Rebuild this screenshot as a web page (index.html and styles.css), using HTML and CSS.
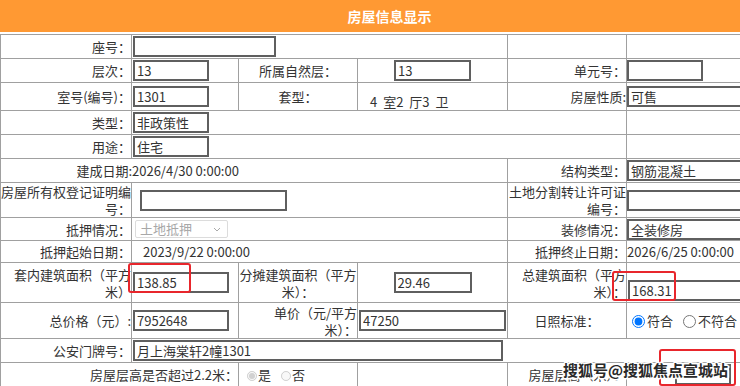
FILE: index.html
```html
<!DOCTYPE html>
<html lang="zh-CN">
<head>
  <meta charset="UTF-8">
  <title>房屋信息显示</title>
  <link rel="stylesheet" href="styles.css">
</head>
<body>
  <div class="page">
    <div class="title-bar">房屋信息显示</div>
    <table class="info-table">
      <colgroup>
        <col class="c1"><col class="c2"><col class="c3"><col class="c4"><col class="c5"><col class="c6">
      </colgroup>
      <tr>
        <td class="lbl">座号：</td>
        <td colspan="3"><input class="ipt w143" value=""></td>
        <td></td>
        <td></td>
      </tr>
      <tr>
        <td class="lbl">层次：</td>
        <td><input class="ipt w76" value="13"></td>
        <td class="lbl-c">所属自然层：</td>
        <td><input class="ipt w77 center" value="13"></td>
        <td class="lbl">单元号：</td>
        <td><input class="ipt w76 flush" value=""></td>
      </tr>
      <tr>
        <td class="lbl">室号(编号)：</td>
        <td><input class="ipt w76" value="1301"></td>
        <td class="lbl-c">套型：</td>
        <td class="room-type">4 室2 厅3 卫</td>
        <td class="lbl">房屋性质:</td>
        <td><input class="ipt w150 flush" value="可售"></td>
      </tr>
      <tr>
        <td class="lbl">类型：</td>
        <td colspan="4"><input class="ipt w76" value="非政策性"></td>
        <td></td>
      </tr>
      <tr>
        <td class="lbl">用途：</td>
        <td colspan="4"><input class="ipt w76" value="住宅"></td>
        <td></td>
      </tr>
      <tr>
        <td class="lbl no-line">建成日期:</td>
        <td colspan="3" class="txt">2026/4/30 0:00:00</td>
        <td class="lbl">结构类型：</td>
        <td><input class="ipt w150 flush" value="钢筋混凝土"></td>
      </tr>
      <tr class="tall">
        <td class="lbl">房屋所有权登记证明编号：</td>
        <td colspan="3"><input class="ipt w147 indent" value=""></td>
        <td class="lbl">土地分割转让许可证编号：</td>
        <td><input class="ipt w150 flush" value=""></td>
      </tr>
      <tr class="r23">
        <td class="lbl">抵押情况：</td>
        <td colspan="3">
          <span class="sel">
            <select disabled><option>土地抵押</option></select>
            <svg class="chev" width="8" height="5" viewBox="0 0 8 5"><path d="M1 1l3 3 3-3" fill="none" stroke="#aaa" stroke-width="1"/></svg>
          </span>
        </td>
        <td class="lbl">装修情况：</td>
        <td><input class="ipt w150 flush" value="全装修房"></td>
      </tr>
      <tr class="r22">
        <td class="lbl">抵押起始日期：</td>
        <td colspan="3" class="txt date-in">2023/9/22 0:00:00</td>
        <td class="lbl">抵押终止日期：</td>
        <td class="txt">2026/6/25 0:00:00</td>
      </tr>
      <tr class="r40">
        <td class="lbl">套内建筑面积（平方米）</td>
        <td><input class="ipt w96" value="138.85"></td>
        <td class="lbl-c">分摊建筑面积（平方米）：</td>
        <td><input class="ipt w78 center" value="29.46"></td>
        <td class="lbl">总建筑面积（平方米）：</td>
        <td class="bottom"><input class="ipt w150 nudge" value="168.31"></td>
      </tr>
      <tr class="r36">
        <td class="lbl">总价格（元）:</td>
        <td><input class="ipt w96" value="7952648"></td>
        <td class="lbl narrow">单价（元/平方米）：</td>
        <td><input class="ipt w147 center" value="47250"></td>
        <td class="lbl-c">日照标准：</td>
        <td class="radios">
          <label><input type="radio" name="sun" checked>符合</label>
          <label><input type="radio" name="sun">不符合</label>
        </td>
      </tr>
      <tr>
        <td class="lbl">公安门牌号：</td>
        <td colspan="5"><input class="ipt w370" value="月上海棠轩2幢1301"></td>
      </tr>
      <tr>
        <td colspan="2" class="lbl">房屋层高是否超过2.2米：</td>
        <td class="radios small">
          <label><input type="radio" name="high" checked disabled>是</label>
          <label><input type="radio" name="high" disabled>否</label>
        </td>
        <td></td>
        <td class="lbl">房屋层高（米）：</td>
        <td><input class="ipt w56 center" value=""></td>
      </tr>
    </table>
    <div class="next-btn"></div>

    <div class="mark box-a"></div>
    <div class="mark box-b"></div>
    <div class="mark box-c"></div>
    <div class="watermark">搜狐号@搜狐焦点宣城站</div>
  </div>
</body>
</html>
```

FILE: styles.css
```css
html, body {
  margin: 0;
  padding: 0;
  overflow: hidden;
  background: #fff;
}
body {
  font-family: "Noto Sans CJK SC", "Microsoft YaHei", sans-serif;
  font-size: 13px;
  color: #333;
}
.page {
  position: relative;
  width: 779px;
}
.title-bar {
  height: 32px;
  line-height: 32px;
  background: #ff9933;
  color: #fff;
  font-weight: bold;
  font-size: 14px;
  text-align: center;
  margin-bottom: 2px;
}
.info-table {
  width: 779px;
  table-layout: fixed;
  border-collapse: separate;
  border-spacing: 0;
  border-top: 1px solid #a0a0a0;
  border-left: 1px solid #a0a0a0;
}
.c1 { width: 131px; }
.c2 { width: 107px; }
.c3 { width: 119px; }
.c4 { width: 150px; }
.c5 { width: 119px; }
.c6 { width: 152px; }
.info-table tr { height: 24px; }
.info-table tr.tall { height: 34px; }
.info-table tr.r23 { height: 23px; }
.info-table tr.r22 { height: 22px; }
.info-table tr.r40 { height: 40px; }
.info-table tr.r36 { height: 36px; }
.info-table td {
  border-right: 1px solid #a0a0a0;
  border-bottom: 1px solid #a0a0a0;
  padding: 0;
  line-height: 17px;
  vertical-align: middle;
  box-sizing: border-box;
}
.lbl {
  text-align: right;
}
.lbl-c {
  text-align: center;
}
.info-table td.narrow {
  padding-left: 32px;
}
.info-table td.no-line {
  border-right: none;
}
.txt {
  white-space: nowrap;
}
.info-table td.date-in {
  padding-left: 11px;
}
.info-table td.room-type {
  padding: 10px 0 0 12px;
  white-space: nowrap;
  word-spacing: 3px;
}
.info-table td.bottom {
  vertical-align: bottom;
  padding-bottom: 1px;
}

.ipt {
  display: block;
  box-sizing: border-box;
  height: 21px;
  margin: 0 0 0 1px;
  padding: 0 2px;
  border: 2px solid #5f5f5f;
  border-radius: 0;
  background: #fff;
  font-family: inherit;
  font-size: 13px;
  color: #333;
  outline: none;
}
.ipt.flush { margin-left: 0; }
.ipt.nudge { margin-left: 1px; }
.ipt.indent { margin-left: 8px; }
.ipt.center { margin: 0 auto; }
.w56 { width: 56px; }
.w76 { width: 76px; }
.w77 { width: 77px; }
.w78 { width: 78px; }
.w96 { width: 96px; }
.w143 { width: 143px; }
.w147 { width: 147px; }
.w150 { width: 150px; }
.w370 { width: 370px; }

.sel {
  position: relative;
  display: block;
  width: 93px;
  height: 18px;
  margin-left: 3px;
}
.sel select {
  appearance: none;
  -webkit-appearance: none;
  box-sizing: border-box;
  width: 100%;
  height: 100%;
  margin: 0;
  padding: 0 0 0 4px;
  border: 1px solid #dcdcdc;
  border-radius: 2px;
  background: #fff;
  font-family: inherit;
  font-size: 13px;
  line-height: 16px;
  color: #a8a8a8;
  opacity: 1;
}
.chev {
  position: absolute;
  right: 7px;
  top: 7px;
}

.radios {
  white-space: nowrap;
}
.radios label {
  margin-right: 2px;
}
.radios input {
  width: 13px;
  height: 13px;
  margin: 0 2px 0 5px;
  vertical-align: -2px;
}
.info-table td.radios.small {
  padding-left: 3px;
}
.radios.small input {
  width: 10px;
  height: 10px;
  margin: 0 1px 0 5px;
  vertical-align: -1px;
}

.next-btn {
  width: 52px;
  height: 20px;
  margin: 2px 0 0 213px;
  background: #3f9a83;
}

.mark {
  position: absolute;
  border: 2px solid #e8262c;
  border-radius: 3px;
}
.box-a { left: 128px; top: 263px; width: 59px; height: 26px; }
.box-b { left: 612px; top: 271px; width: 60px; height: 26px; }
.box-c { left: 659px; top: 349px; width: 73px; height: 33px; }

.watermark {
  position: absolute;
  left: 563px;
  top: 357px;
  font-size: 15px;
  font-weight: bold;
  line-height: 26px;
  color: #2a2a2a;
  white-space: nowrap;
  text-shadow: 1px 0 0 #fff, -1px 0 0 #fff, 0 1px 0 #fff, 0 -1px 0 #fff,
    1px 1px 0 #fff, -1px -1px 0 #fff, 1px -1px 0 #fff, -1px 1px 0 #fff,
    2px 0 1px #fff, -2px 0 1px #fff, 0 2px 1px #fff, 0 -2px 1px #fff;
}
```
